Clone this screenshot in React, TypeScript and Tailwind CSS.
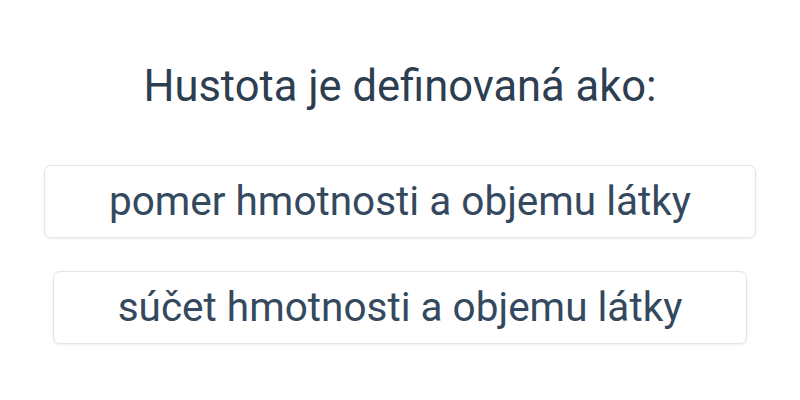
import React from "react";

const ANSWERS = [
  "pomer hmotnosti a objemu látky",
  "súčet hmotnosti a objemu látky",
];

export default function App() {
  return (
    <div
      className="w-[800px] h-[400px] bg-white flex flex-col items-center pt-[65px] text-[#2c3e50]"
      style={{ fontFamily: "Roboto, 'Liberation Sans', sans-serif" }}
    >
      <h1 className="text-[43.5px] leading-none font-normal">Hustota je definovaná ako:</h1>
      <div className="mt-[56px] flex flex-col items-center gap-[33px]">
        {ANSWERS.map((label) => (
          <button
            key={label}
            type="button"
            className="h-[73px] px-[64px] text-[40.5px] leading-none text-[#34495e] bg-white border border-[#e3e6e8] rounded-[7px] shadow-[0_1px_3px_rgba(0,0,0,0.08)]"
          >
            {label}
          </button>
        ))}
      </div>
    </div>
  );
}
